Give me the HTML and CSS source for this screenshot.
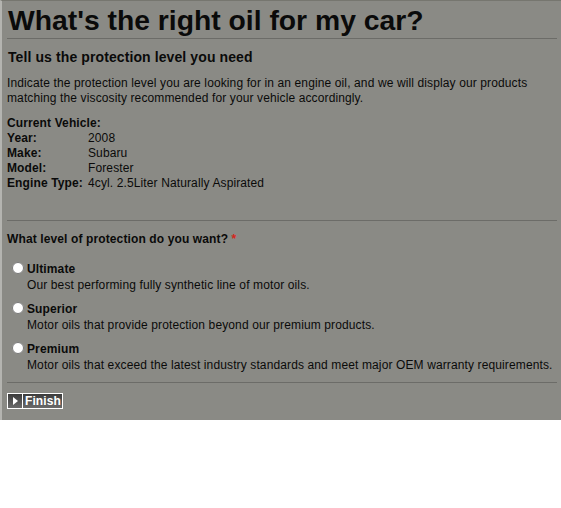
FILE: index.html
```html
<!DOCTYPE html>
<html lang="en">
<head>
    <meta charset="UTF-8">
    <title>What's the right oil for my car?</title>
    <link rel="stylesheet" href="styles.css">
</head>
<body>
    <div class="page">
        <h1>What's the right oil for my car?</h1>
        <h2>Tell us the protection level you need</h2>
        <p class="intro">Indicate the protection level you are looking for in an engine oil, and we will display our products matching the viscosity recommended for your vehicle accordingly.</p>

        <div class="vehicle">
            <div class="vehicle-title">Current Vehicle:</div>
            <div class="row"><span class="key">Year:</span><span>2008</span></div>
            <div class="row"><span class="key">Make:</span><span>Subaru</span></div>
            <div class="row"><span class="key">Model:</span><span>Forester</span></div>
            <div class="row"><span class="key">Engine Type:</span><span>4cyl. 2.5Liter Naturally Aspirated</span></div>
        </div>

        <div class="question">What level of protection do you want? <span class="req">*</span></div>

        <form class="levels">
            <label class="level">
                <input type="radio" name="level">
                <span class="level-text">
                    <strong>Ultimate</strong>
                    <span>Our best performing fully synthetic line of motor oils.</span>
                </span>
            </label>
            <label class="level">
                <input type="radio" name="level">
                <span class="level-text">
                    <strong>Superior</strong>
                    <span>Motor oils that provide protection beyond our premium products.</span>
                </span>
            </label>
            <label class="level">
                <input type="radio" name="level">
                <span class="level-text">
                    <strong>Premium</strong>
                    <span>Motor oils that exceed the latest industry standards and meet major OEM warranty requirements.</span>
                </span>
            </label>
        </form>

        <div class="actions">
            <button class="finish" type="button"><span class="arrow"></span><span class="label">Finish</span></button>
        </div>
    </div>
</body>
</html>
```

FILE: styles.css
```css
body {
    margin: 0;
    background: #fff;
    font-family: "Liberation Sans", Arial, sans-serif;
    font-size: 12px;
    letter-spacing: 0.12px;
    color: #0a0a0a;
}
.page {
    width: 554px;
    height: 419px;
    background: #8a8a85;
    border-left: 2px solid #b4b4b0;
    border-top: 1px solid #76766f;
    padding: 0 0 0 5px;
}
h1 {
    margin: 0 4px 0 0;
    padding: 4px 0 2px 1px;
    font-size: 28.3px;
    letter-spacing: 0;
    line-height: 31px;
    border-bottom: 1px solid #6c6c68;
}
h2 {
    margin: 9px 0 0 1px;
    font-size: 14px;
    letter-spacing: 0.1px;
    line-height: 18px;
}
.intro {
    margin: 10px 0 0 0;
    line-height: 15px;
}
.vehicle {
    margin-top: 10px;
    line-height: 15px;
    padding-bottom: 29px;
    border-bottom: 1px solid #6c6c68;
    margin-right: 4px;
}
.vehicle-title, .key, .question, .level strong {
    font-weight: bold;
}
.row {
    display: flex;
}
.key {
    width: 81px;
}
.question {
    margin-top: 11px;
    line-height: 15px;
}
.req {
    color: #d4261a;
}
.levels {
    margin: 14px 4px 0 0;
    padding-bottom: 9px;
    border-bottom: 1px solid #6c6c68;
}
.level {
    display: flex;
    align-items: flex-start;
    line-height: 16px;
    margin-bottom: 8px;
}
.level:last-child {
    margin-bottom: 0;
}
.level input {
    width: 12px;
    height: 12px;
    margin: 1px 3px 0 5px;
}
.level-text {
    display: flex;
    flex-direction: column;
}
.actions {
    padding-top: 10px;
}
.finish {
    display: flex;
    align-items: stretch;
    padding: 0;
    border: 1px solid #fff;
    background: linear-gradient(#3c3c3c, #6a6a6a);
    height: 16px;
    cursor: pointer;
}
.arrow {
    width: 14px;
    border-right: 1px solid #fff;
    position: relative;
}
.arrow::after {
    content: "";
    position: absolute;
    left: 5px;
    top: 3px;
    border-left: 5px solid #fff;
    border-top: 4px solid transparent;
    border-bottom: 4px solid transparent;
}
.finish .label {
    color: #fff;
    font-family: "Liberation Sans", Arial, sans-serif;
    font-weight: bold;
    font-size: 12px;
    letter-spacing: 0.1px;
    line-height: 14px;
    padding: 0 1px 0 2px;
}
```
